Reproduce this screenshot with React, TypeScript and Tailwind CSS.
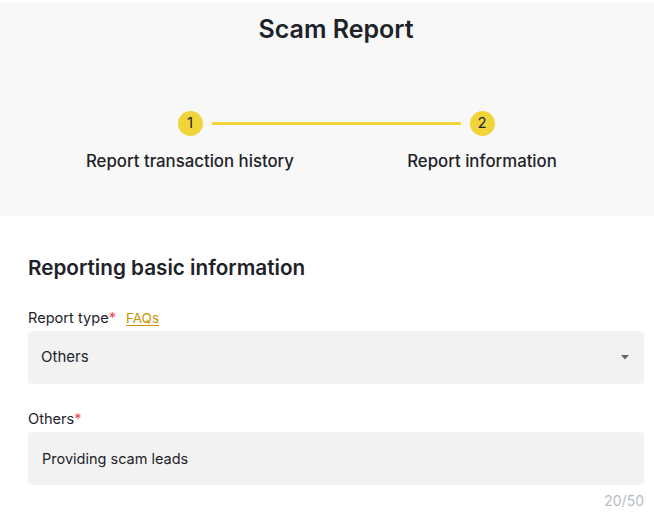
import React from "react";

export default function App() {
  const font = { fontFamily: "Inter, 'Noto Sans', sans-serif" };
  return (
    <div className="w-[654px] h-[519px] bg-white text-[#1e2329] overflow-hidden" style={font}>
      <div className="pt-[3px]">
        <div className="bg-[#f8f8f8] h-[213px] pl-[18px]">
          <h1 className="pt-[10px] text-center text-[25px] leading-[32px] font-semibold text-[#1e2329]">
            Scam Report
          </h1>
          <div className="mt-[66px] mx-auto w-[317px] flex items-center">
            <div className="w-[25px] h-[25px] rounded-full bg-[#f0d43a] flex items-center justify-center text-[15px] text-[#1e2329]">
              1
            </div>
            <div className="flex-1 mx-[9px] h-[3px] bg-[#f0d43a]" />
            <div className="w-[25px] h-[25px] rounded-full bg-[#f0d43a] flex items-center justify-center text-[15px] text-[#1e2329]">
              2
            </div>
          </div>
          <div className="mt-[13px] flex justify-center">
            <div className="w-[292px] text-center text-[16.8px] leading-[24px] font-medium">
              Report transaction history
            </div>
            <div className="w-[292px] text-center text-[16.8px] leading-[24px] font-medium">
              Report information
            </div>
          </div>
        </div>
      </div>
      <div className="pl-[28px] pr-[10px]">
        <h2 className="mt-[38px] text-[20.7px] leading-[28px] font-semibold">Reporting basic information</h2>
        <div className="mt-[26px] flex items-center text-[14.6px] leading-[20px]">
          <span>Report type</span>
          <span className="text-[#f6465d]">*</span>
          <span className="ml-[10px] text-[13.5px] text-[#c99400] underline underline-offset-2">FAQs</span>
        </div>
        <div className="mt-[3px] h-[53px] rounded-[4px] bg-[#f2f2f2] flex items-center justify-between pl-[13px] pr-[15px]">
          <span className="text-[15px]">Others</span>
          <svg width="8" height="5" viewBox="0 0 8 5">
            <path d="M0 0 H8 L4 4.5 Z" fill="#5e6673" />
          </svg>
        </div>
        <div className="mt-[25px] flex items-center text-[14.6px] leading-[20px]">
          <span>Others</span>
          <span className="text-[#f6465d]">*</span>
        </div>
        <div className="mt-[3px] h-[53px] rounded-[4px] bg-[#f2f2f2] flex items-center pl-[14px]">
          <span className="text-[14.5px]">Providing scam leads</span>
        </div>
        <div className="mt-[6px] text-right text-[14px] leading-[20px] text-[#b7bdc6]">20/50</div>
      </div>
    </div>
  );
}
